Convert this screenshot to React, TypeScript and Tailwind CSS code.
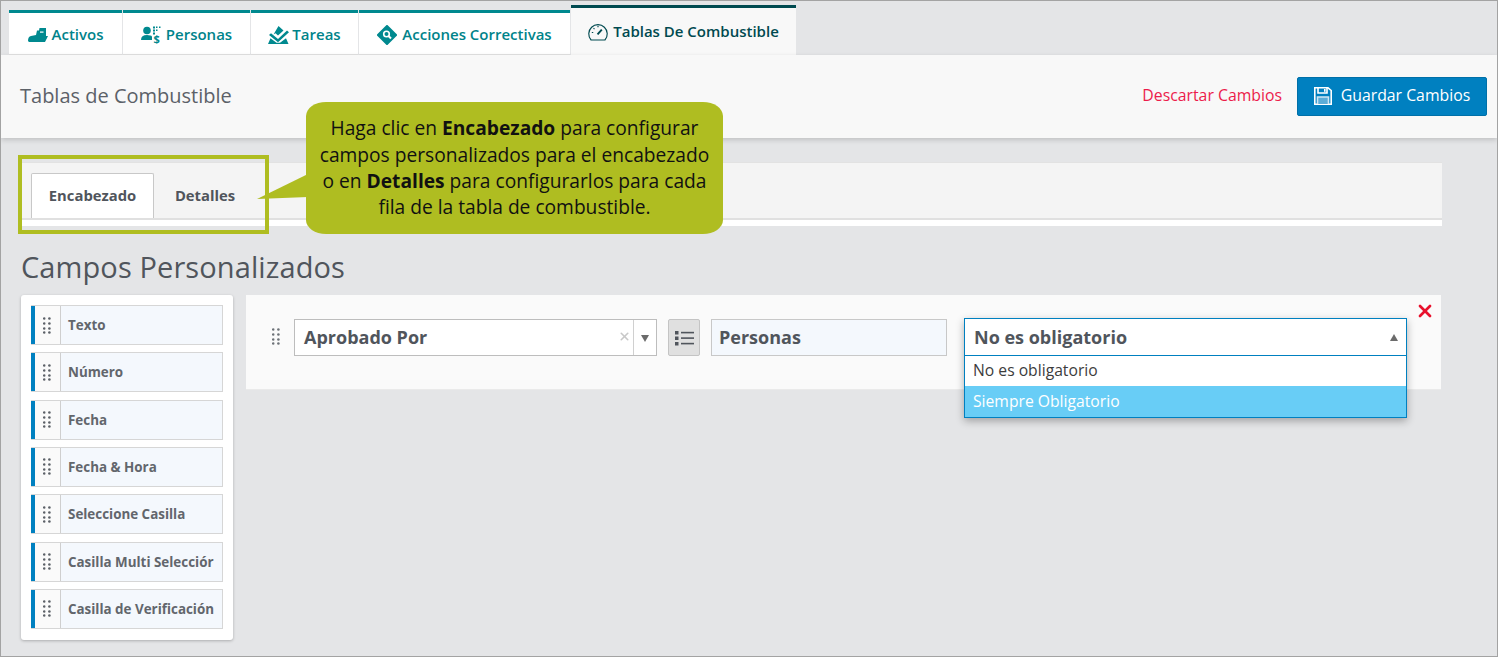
import { X } from 'lucide-react';

const font = { fontFamily: '"Open Sans", sans-serif' };

const ShipIcon = () => (
  <svg width="20" height="14" viewBox="0 0 20 14">
    <path fill="#00898f" d="M0 13 Q0 8.5 3 8 L8 7 L9 2.5 L11 2.5 L11.5 0 L18 0 L18 8 L20 8 L17 14 L1 14 Z" />
    <rect x="12" y="3.5" width="3.5" height="1.2" fill="#fff" />
  </svg>
);

const PersonMoneyIcon = () => (
  <svg className="overflow-visible" width="20" height="18" viewBox="0 0 20 18" fill="#00898f">
    <circle cx="6" cy="4.5" r="3.8" />
    <path d="M0 14 Q0 9 6 9 Q10 9 11 10.5 L11 14 Z" />
    <rect x="12" y="0.5" width="2" height="2" />
    <rect x="15" y="0.5" width="1.5" height="1.5" />
    <rect x="18" y="0.5" width="1.5" height="1.5" />
    <rect x="12" y="3.5" width="2" height="2" />
    <rect x="15" y="3.5" width="1.5" height="1.5" />
    <rect x="12" y="6.5" width="2" height="2" />
    <text x="12.5" y="17" fontSize="11" fontWeight="700" fontFamily="Open Sans, sans-serif">$</text>
  </svg>
);

const TasksIcon = () => (
  <svg width="21" height="18" viewBox="0 0 21 20" preserveAspectRatio="none" fill="#00898f">
    <path d="M10.5 0 L15.5 5 L10 10.5 L7.5 8 L5.5 9.5 Z" />
    <path d="M3 8 L10 14.5 L19 5 L21 7 L10 18 L1 10 Z" />
    <path d="M0 20 L2.5 13.5 L8.5 18.5 L12 18.5 L18 13.5 L20.5 20 Z" />
  </svg>
);

const DiamondSearchIcon = () => (
  <svg width="20" height="20" viewBox="0 0 20 20">
    <rect x="2.6" y="2.6" width="14.8" height="14.8" rx="1" transform="rotate(45 10 10)" fill="#00898f" />
    <circle cx="9.5" cy="9" r="2.8" fill="none" stroke="#fff" strokeWidth="1.6" />
    <path d="M11.5 11 L14 13.5" stroke="#fff" strokeWidth="2" />
  </svg>
);

const GaugeIcon = () => (
  <svg width="20" height="18" viewBox="0 0 21 18" fill="none" stroke="#004a50" strokeWidth="1.2">
    <path d="M3.2 17.4 A9.7 9.7 0 1 1 17.8 17.4 Z" />
    <path d="M10 11.5 L14.5 6.5" strokeWidth="2" />
    <path d="M10.5 2.5 V4 M4 9.5 H5.5 M5.8 5 L6.8 6" />
  </svg>
);

const SaveIcon = () => (
  <svg width="18" height="18" viewBox="0 0 18 18" fill="none" stroke="#fff" strokeWidth="1.6">
    <path d="M0.8 0.8 H14 L17.2 3.5 V17.2 H0.8 Z" />
    <path d="M4 1 V6 H13 V1" />
    <path d="M3.5 17 V10 H14.5 V17" fill="#5badd8" stroke="#cfe6f3" />
    <rect x="10" y="2" width="1.6" height="2.8" fill="#fff" stroke="none" />
  </svg>
);

const ListIcon = () => (
  <svg width="19" height="16" viewBox="0 0 19 16" fill="#50555c">
    <rect x="0" y="1" width="3.5" height="3.5" />
    <rect x="0" y="6.5" width="3.5" height="3.5" />
    <rect x="0" y="12" width="3.5" height="3.5" />
    <rect x="6" y="1.8" width="13" height="1.6" />
    <rect x="6" y="7.3" width="13" height="1.6" />
    <rect x="6" y="12.8" width="13" height="1.6" />
  </svg>
);

const Grip = ({ color }: { color: string }) => (
  <svg width="9" height="17" viewBox="0 0 9 17" fill={color}>
    {[1.5, 6.5, 11.5, 15.5].map((y) =>
      [1.2, 6.4].map((x) => <circle key={`${x}-${y}`} cx={x} cy={y} r="1.3" />),
    )}
  </svg>
);

const tabs = [
  { label: 'Activos', icon: <ShipIcon />, width: 'w-[113px]', gap: 'gap-[4px]' },
  { label: 'Personas', icon: <PersonMoneyIcon />, width: 'w-[127px]', gap: 'gap-[5px]' },
  { label: 'Tareas', icon: <TasksIcon />, width: 'w-[107px]', gap: 'gap-[3px]' },
  { label: 'Acciones Correctivas', icon: <DiamondSearchIcon />, width: 'w-[211px]', gap: 'gap-[5px]' },
];

const fieldTypes = [
  'Texto',
  'Número',
  'Fecha',
  'Fecha & Hora',
  'Seleccione Casilla',
  'Casilla Multi Selecciór',
  'Casilla de Verificación',
];

export default function App() {
  return (
    <div
      className="relative w-[1498px] h-[657px] overflow-hidden bg-[#e4e5e7] border border-[#a3a3a3] flex flex-col"
      style={font}
    >
      {/* main tabs */}
      <div className="h-[54px] pl-2 flex items-end gap-px shrink-0">
        {tabs.map((t) => (
          <div
            key={t.label}
            className={`${t.width} ${t.gap} h-[45px] bg-white border-t-[3px] border-b border-t-[#00898f] border-b-[#e2e2e2] flex items-center justify-center text-[15px] font-semibold text-[#00838a] whitespace-nowrap pt-[2px]`}
          >
            {t.icon}
            <span>{t.label}</span>
          </div>
        ))}
        <div className="w-[225px] h-[50px] bg-[#f8f8f8] border-t-[3px] border-[#004a50] flex items-center justify-center gap-[5px] text-[15px] font-semibold text-[#004a50] whitespace-nowrap">
          <GaugeIcon />
          <span>Tablas De Combustible</span>
        </div>
      </div>

      {/* page header */}
      <div className="h-[83px] shrink-0 bg-[#f8f8f8] shadow-[0_2px_5px_rgba(0,0,0,0.16)] flex items-center justify-between pl-[19px] pr-[10px]">
        <div className="text-[20px] text-[#5c6168] pb-[1px]">Tablas de Combustible</div>
        <div className="flex items-center gap-[15px] pb-[1px]">
          <span className="text-[15.8px] text-[#ec1c4b]">Descartar Cambios</span>
          <div className="w-[190px] h-[39px] bg-[#0080c0] border border-[#0070a8] rounded-[2px] flex items-center justify-center gap-[9px] text-[15.8px] text-white">
            <SaveIcon />
            <span>Guardar Cambios</span>
          </div>
        </div>
      </div>

      {/* sub tabs */}
      <div className="mt-[24px] ml-5 w-[1421px] h-[64px] shrink-0 bg-white border-t border-[#e2e2e2]">
        <div className="h-[57px] bg-[#f4f4f4] border-b-2 border-[#e0e0e0] pl-[10px] flex items-end">
          <div className="w-[123px] h-[45px] bg-white border border-b-0 border-[#c8c8c8] rounded-t-[2px] flex items-center justify-center text-[14.8px] font-bold text-[#50555c] pb-[1px]">
            Encabezado
          </div>
          <div className="w-[102px] h-[45px] flex items-center justify-center text-[14.8px] font-bold text-[#50555c]">
            Detalles
          </div>
        </div>
      </div>

      <h2 className="ml-5 mt-[22px] h-[38px] leading-[38px] text-[29px] text-[#50555c] tracking-[0.1px]">
        Campos Personalizados
      </h2>

      <div className="mt-[9px] ml-5 flex items-start gap-[13px]">
        {/* field palette */}
        <div className="w-[212px] h-[345px] bg-white rounded-[3px] shadow-[0_1px_3px_rgba(0,0,0,0.25)] p-[10px] flex flex-col gap-[7.33px]">
          {fieldTypes.map((f) => (
            <div
              key={f}
              className="h-[40px] flex bg-[#f4f8fd] border border-l-0 border-[#d6d6d6] overflow-hidden"
            >
              <div className="w-[4px] -mt-px -mb-px bg-[#0080c0] shrink-0" />
              <div className="w-[26px] shrink-0 bg-[#fafafa] border-r border-[#cfcfcf] flex items-center justify-center pr-[1px]">
                <Grip color="#5c6168" />
              </div>
              <div className="pl-[7px] flex items-center text-[13.4px] font-bold text-[#62666c] whitespace-nowrap">
                {f}
              </div>
            </div>
          ))}
        </div>

        {/* field row */}
        <div className="relative w-[1195px] h-[95px] bg-[#fafafa] border-b border-[#eaeaea] pl-[26px] pt-[24px] flex items-start">
          <div className="pt-[9px] w-[22px] shrink-0">
            <Grip color="#6d7278" />
          </div>
          <div className="w-[363px] h-[37px] shrink-0 bg-white border border-[#bdbdbd] flex items-center">
            <span className="flex-1 pl-[9px] text-[18px] font-bold text-[#50555c]">Aprobado Por</span>
            <span className="text-[#c8c8c8] pr-[2px] -mt-[2px]">
              <X size={13} strokeWidth={3} />
            </span>
            <div className="w-[23px] h-full border-l border-[#d0d0d0] flex items-center justify-center">
              <div className="w-0 h-0 border-x-[4px] border-x-transparent border-t-[7px] border-t-[#6b6b6b] mt-[1px]" />
            </div>
          </div>
          <div className="ml-[11px] w-[32px] h-[37px] shrink-0 bg-[#e0e0e0] border border-[#c4c4c4] rounded-[2px] flex items-center justify-center">
            <ListIcon />
          </div>
          <div className="ml-[11px] w-[236px] h-[37px] shrink-0 bg-[#f4f8fd] border border-[#c8c8c8] flex items-center pl-[7px] text-[18px] font-bold text-[#50555c]">
            Personas
          </div>
          <div className="absolute left-[718px] top-[23px] w-[443px] bg-white border border-[#0080c0] shadow-[0_3px_8px_rgba(0,0,0,0.3)]">
            <div className="h-[37px] border-b border-[#0080c0] flex items-center justify-between pl-[9px] pr-[8px] text-[18px] font-bold text-[#50555c]">
              <span>No es obligatorio</span>
              <div className="w-0 h-0 border-x-[4px] border-x-transparent border-b-[7px] border-b-[#6b6b6b]" />
            </div>
            <div className="h-[30px] flex items-center pl-[8px] text-[15.7px] text-[#3c3c3c]">No es obligatorio</div>
            <div className="h-[31px] bg-[#68cdf6] flex items-center pl-[8px] text-[15.7px] text-white">Siempre Obligatorio</div>
          </div>
          <span className="absolute left-[1169px] top-[6px] text-[#e8112d]">
            <X size={20} strokeWidth={3.2} />
          </span>
        </div>
      </div>

      {/* annotation over the sub tabs */}
      <div className="absolute left-[17px] top-[154px] w-[251px] h-[79px] border-[4px] border-[#afbd21]" />
      <svg className="absolute left-[255px] top-[165px]" width="60" height="45" viewBox="0 0 60 45" fill="#afbd21">
        <path d="M1 33 L52 8 L52 31 Z" />
      </svg>
      <div className="absolute left-[305px] top-[101px] w-[417px] h-[132px] bg-[#afbd21] rounded-[20px/14px] flex items-center justify-center text-center text-[19.2px] leading-[26.3px] text-[#111] whitespace-nowrap">
        <p>
          Haga clic en <b>Encabezado</b> para configurar
          <br />
          campos personalizados para el encabezado
          <br />
          o en <b>Detalles</b> para configurarlos para cada
          <br />
          fila de la tabla de combustible.
        </p>
      </div>
    </div>
  );
}
